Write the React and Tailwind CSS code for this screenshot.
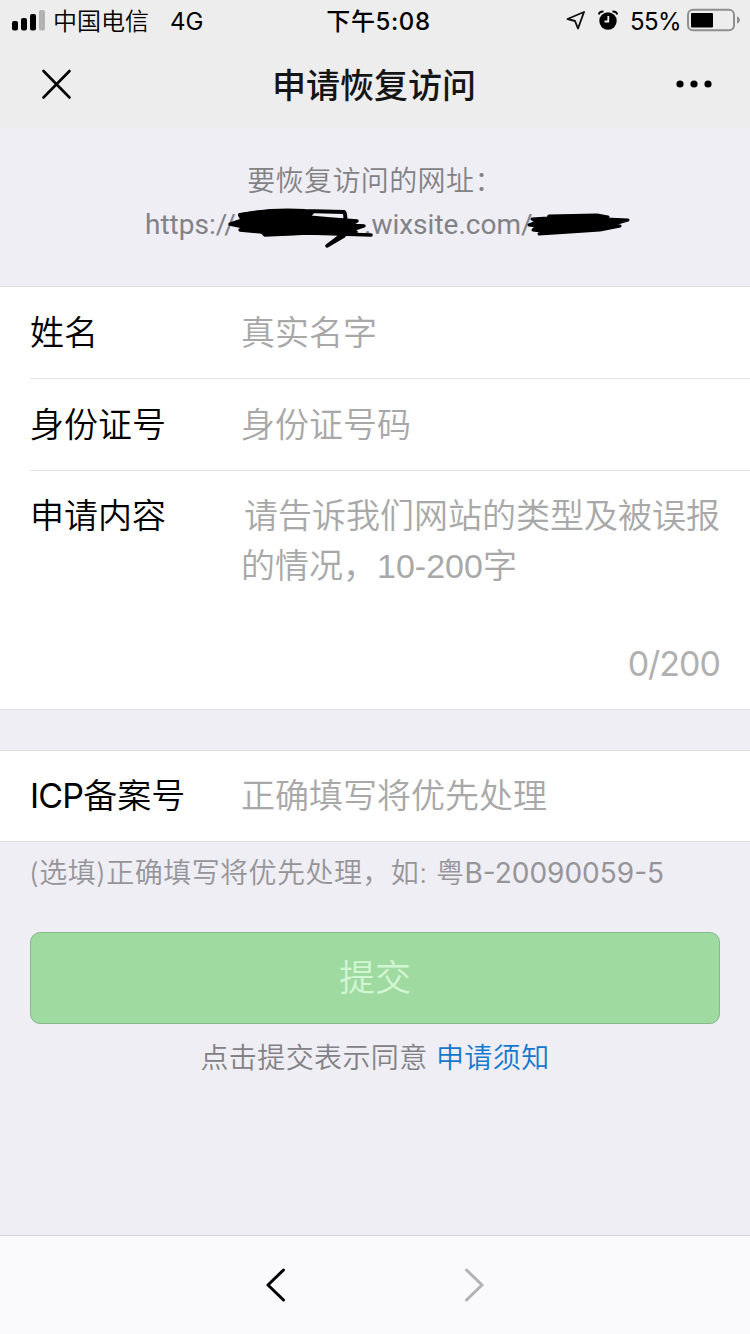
import React from 'react';

const StatusBar = () => (
    <div className="flex h-10 items-center pr-[11px] pl-3 text-[24px] leading-10 text-black">
        <div className="flex flex-1 items-center">
            <svg width="33" height="21" viewBox="0 0 33 21">
                <rect x="0" y="11" width="6" height="9.5" rx="2" />
                <rect x="9" y="8" width="6" height="12.5" rx="2" />
                <rect x="18" y="4" width="6" height="16.5" rx="2" />
                <rect x="27" y="0" width="6" height="20.5" rx="2" fill="#b2b2b2" />
            </svg>
            <span className="mt-[3px] ml-2">中国电信</span>
            <span className="mt-[3px] ml-[21px] font-normal">4G</span>
        </div>
        <span className="mt-[3px] ml-1.5 font-medium tracking-[0.6px]">下午5:08</span>
        <div className="flex flex-1 items-center justify-end">
            <svg width="20" height="20" viewBox="0 0 20 20" fill="none" stroke="#111" strokeWidth="1.9" strokeLinejoin="round">
                <path d="M18 2 L1.5 9 L9 11 L12 18.5 Z" />
            </svg>
            <svg width="20" height="20" viewBox="0 0 20 20" className="ml-[12px]">
                <circle cx="10" cy="11" r="8.7" />
                <path d="M0.7 4.5 Q1.5 1.3 5.5 1.5 M19.3 4.5 Q18.5 1.3 14.5 1.5" fill="none" stroke="#000" strokeWidth="1.8" />
                <path d="M10.3 6 V11.5 H6.5" fill="none" stroke="#eee" strokeWidth="1.8" />
            </svg>
            <span className="mt-[3px] ml-3 font-normal tracking-[-0.6px]">55%</span>
            <svg width="54" height="24" viewBox="0 0 54 24" className="-mr-0.5 ml-1.5">
                <rect x="1" y="1.8" width="46" height="20.5" rx="5" fill="none" stroke="#8f8f8f" strokeWidth="2" />
                <rect x="4" y="5" width="22" height="14.5" rx="1" />
                <path d="M50 8.2 Q53 9.5 53 12 Q53 14.5 50 15.8 Z" fill="#8f8f8f" />
            </svg>
        </div>
    </div>
);

const TitleBar = () => (
    <div className="flex h-[88px] items-center justify-between pr-[37px] pl-[41px]">
        <svg width="31" height="31" viewBox="0 0 31 31" stroke="#000" strokeWidth="2.6" strokeLinecap="round">
            <path d="M2.5 2 L28.5 28.5 M28.5 2 L2.5 28.5" />
        </svg>
        <h1 className="mt-[3px] text-[34px] leading-[48px] font-medium text-[#151515]">申请恢复访问</h1>
        <svg width="37" height="8" viewBox="0 0 37 8">
            <circle cx="4" cy="4" r="3.6" />
            <circle cx="18" cy="4" r="3.6" />
            <circle cx="32" cy="4" r="3.6" />
        </svg>
    </div>
);

const LongScribble = () => (
    <svg width="146" height="42" viewBox="228 207 146 42" className="absolute top-[4px] left-[83px]" fill="none" stroke="#000" strokeLinecap="round" strokeLinejoin="round">
        <path d="M240 215 Q270 209 305 211 L344 212 Q346 214 345 221" strokeWidth="4" />
        <path d="M240 215 Q275 208 312 213 L308 217 L330 219 L357 221 L350 225 L364 226 L352 230 L356 232 L264 234 L262 232 L240 230 L244 227 L230 224 L242 220 Z" fill="#000" strokeWidth="3.4" />
        <path d="M265 235 L308 233 L371 235 M344 233 L327 246 L344 236" strokeWidth="3.6" />
    </svg>
);

const ShortScribble = () => (
    <svg width="104" height="26" viewBox="527 211 104 26" className="absolute top-[8px] left-[382px]" fill="none" stroke="#000" strokeLinecap="round" strokeLinejoin="round">
        <path d="M532 219 L548 218 L549 216 L597 215 L608 217 L606 219 L628 220 L614 224 L620 226 L600 230 L570 232 L539 234 L541 231 L533 230 L537 226 L529 225 L537 222 Z" fill="#000" strokeWidth="3" />
    </svg>
);

const Field = ({ label, hint, divided }) => (
    <div className={`ml-[30px] flex items-center ${divided ? 'h-[92px] border-b border-[#e2e2e4]' : 'h-[90px]'}`}>
        <span className="w-[211px] text-black">{label}</span>
        <span className="text-[#a8a8a8]">{hint}</span>
    </div>
);

const App = () => {
    return (
        <div className="flex h-[1334px] w-[750px] flex-col overflow-hidden bg-[#efeef4] font-['Inter','Noto_Sans_CJK_SC',sans-serif] font-[350]">
            <header className="bg-[#ededed]">
                <StatusBar />
                <TitleBar />
            </header>

            {/* Blocked address */}
            <section className="h-[158px] pt-[31px] text-[28px] leading-[44px] text-[#828286]">
                <p className="text-center tracking-[0.4px]">要恢复访问的网址：</p>
                <div className="relative ml-[145px] flex font-['Roboto'] font-normal">
                    <span className="w-[219px]">https://</span>
                    <span>.wixsite.com/</span>
                    <LongScribble />
                    <ShortScribble />
                </div>
            </section>

            {/* Form */}
            <section className="h-[424px] border-y border-[#e0e0e4] bg-white text-[34px] leading-[50px]">
                <Field label="姓名" hint="真实名字" divided />
                <Field label="身份证号" hint="身份证号码" divided />
                <div className="ml-[30px] flex pt-5">
                    <span className="w-[211px] text-black">申请内容</span>
                    <p className="text-[#a8a8a8]">
                        <span className="ml-[3px]">请告诉我们网站的类型及被误报</span>
                        <br />
                        的情况，<span className="font-['Liberation_Sans']">10-200</span>字
                    </p>
                </div>
                <p className="mt-12 mr-[30px] text-right font-normal tracking-[-1px] text-[#b0b0b0]">0/200</p>
            </section>

            <section className="mt-10 border-y border-[#e0e0e4] bg-white text-[34px] leading-[50px]">
                <Field label={<><span className="font-normal tracking-[-0.8px]">ICP</span>备案号</>} hint="正确填写将优先处理" />
            </section>
            <p className="mt-[9px] ml-[29px] text-[28px] leading-[44px] whitespace-nowrap text-[#959599]">
                <span className="tracking-[0.45px]">(选填)正确填写将优先处理，如: 粤</span>
                <span className="font-normal">B-20090059-5</span>
            </p>

            <button className="mx-[30px] mt-[37px] h-[92px] rounded-[10px] border border-[#88b78c] bg-[#9fdaa1] text-[36px] text-[#d2f5d2]">
                提交
            </button>
            <p className="mt-3 text-center text-[28px] leading-[44px] tracking-[0.4px] text-[#828286]">
                点击提交表示同意 <a className="text-[#1479ce]">申请须知</a>
            </p>

            <nav className="mt-auto flex h-[99px] items-center justify-center gap-[178px] border-t border-[#d2d2d8] bg-[#fafafd]">
                <svg width="20" height="34" viewBox="0 0 20 34" fill="none" stroke="#000" strokeWidth="3" strokeLinecap="round" strokeLinejoin="round">
                    <path d="M17.5 2 L2 17 L17.5 32" />
                </svg>
                <svg width="20" height="34" viewBox="0 0 20 34" fill="none" stroke="#b2b2b4" strokeWidth="3" strokeLinecap="round" strokeLinejoin="round">
                    <path d="M2.5 2 L18 17 L2.5 32" />
                </svg>
            </nav>
        </div>
    );
};

export default App;
